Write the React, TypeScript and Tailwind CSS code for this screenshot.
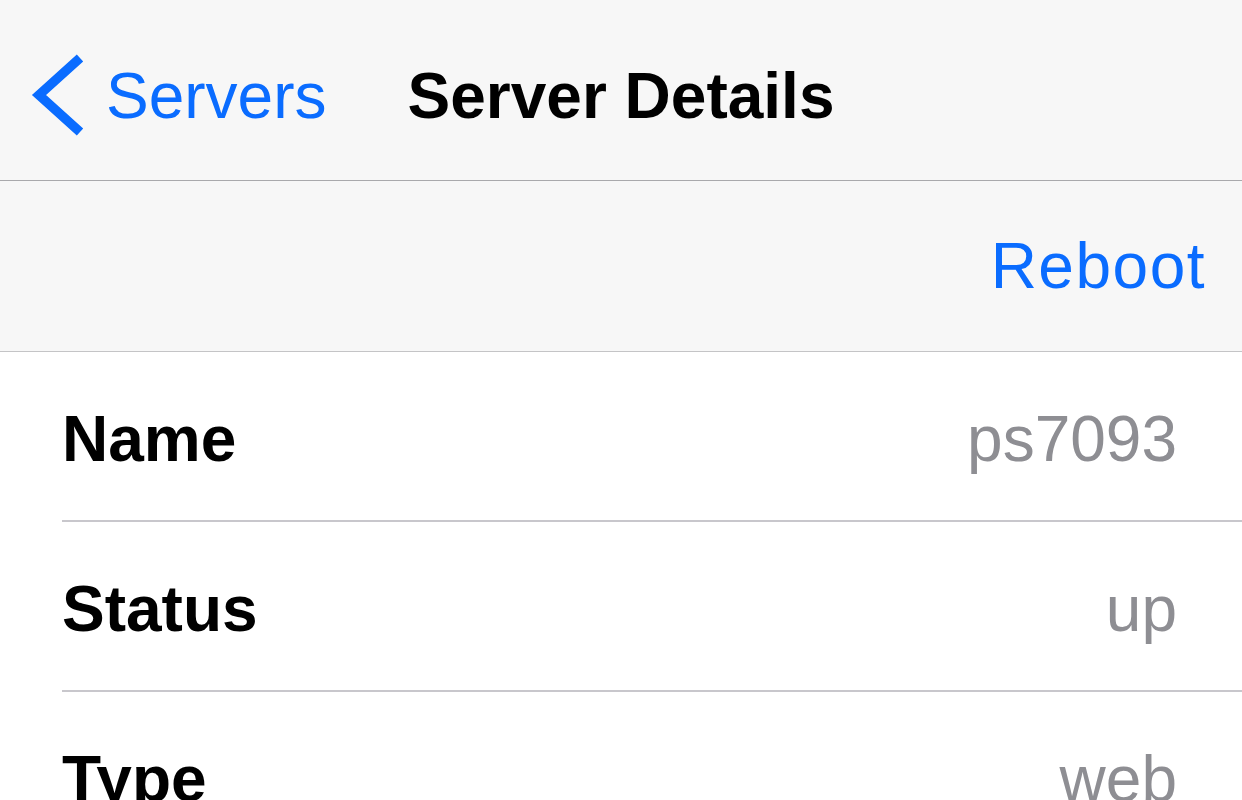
import React from "react";

const rows = [
  { label: "Name", value: "ps7093" },
  { label: "Status", value: "up" },
  { label: "Type", value: "web" },
];

export default function App() {
  return (
    <div
      className="w-[1242px] h-[800px] overflow-hidden bg-white"
      style={{ fontFamily: '"Liberation Sans", Arial, sans-serif' }}
    >
      {/* Navigation bar */}
      <div className="h-[181px] bg-[#f7f7f7] border-b border-[#a9a9ac] grid grid-cols-[1fr_auto_1fr] items-center pt-[12px]">
        <div className="flex items-center pl-[29px]">
          <svg width="58" height="90" viewBox="0 0 58 90" className="shrink-0">
            <polyline
              points="51,7 10,44 51,81"
              fill="none"
              stroke="#0a6cff"
              strokeWidth="9.5"
              strokeLinejoin="miter"
              strokeLinecap="butt"
            />
          </svg>
          <span className="ml-[19px] text-[64px] leading-none text-[#0a6cff]">Servers</span>
        </div>
        <div className="text-[64px] leading-none font-bold text-black">Server Details</div>
        <div />
      </div>

      {/* Toolbar */}
      <div className="h-[171px] bg-[#f7f7f7] border-b border-[#c4c4c6] flex items-center justify-end pr-[36px]">
        <span className="text-[64px] leading-none text-[#0a6cff] tracking-[1.5px]">Reboot</span>
      </div>

      {/* Rows */}
      <div className="flex flex-col">
        {rows.map((r) => (
          <div key={r.label} className="flex flex-col">
            <div className="h-[168px] flex items-center justify-between pl-[62px] pr-[65px] pt-[6px]">
              <span className="text-[64px] leading-none font-bold text-black">{r.label}</span>
              <span className="text-[64px] leading-none text-[#8e8e93]">{r.value}</span>
            </div>
            <div className="ml-[62px] h-[2px] bg-[#c8c7cc]" />
          </div>
        ))}
      </div>
    </div>
  );
}
